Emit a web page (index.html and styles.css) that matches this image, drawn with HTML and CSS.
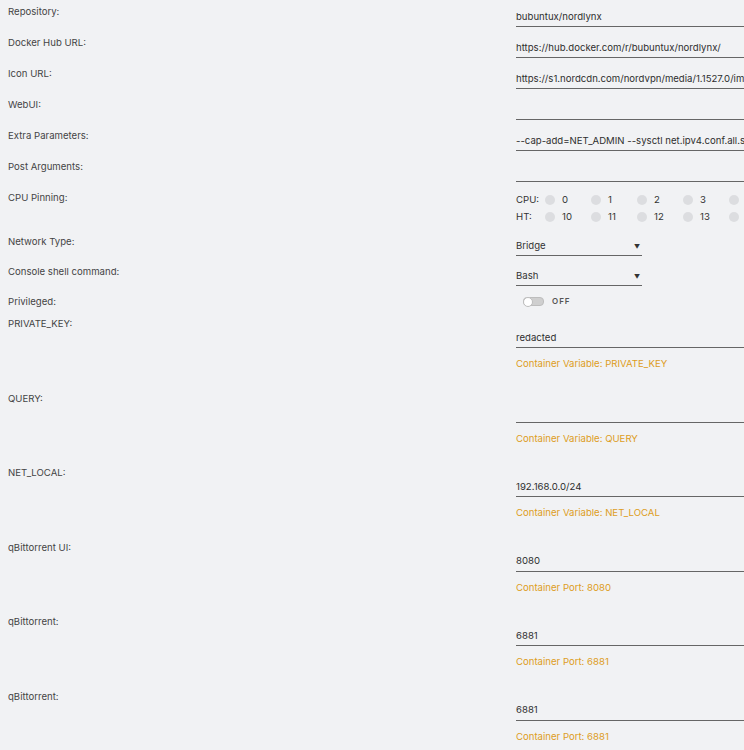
FILE: index.html
```
<!DOCTYPE html>
<html lang="en">
  <head>
    <meta charset="UTF-8" />
    <meta name="viewport" content="width=device-width, initial-scale=1.0" />
    <title>Update Container</title>
    <link rel="stylesheet" href="styles.css">
  </head>
  <body>
    <div class="form">
      <div class="row basic">
        <div class="label">Repository:</div>
        <div class="field"><input type="text" value="bubuntux/nordlynx" /></div>
      </div>
      <div class="row basic">
        <div class="label">Docker Hub URL:</div>
        <div class="field"><input type="text" value="https://hub.docker.com/r/bubuntux/nordlynx/" /></div>
      </div>
      <div class="row basic">
        <div class="label">Icon URL:</div>
        <div class="field"><input type="text" value="https://s1.nordcdn.com/nordvpn/media/1.1527.0/images/global/favicon/favicon-194x194.png" /></div>
      </div>
      <div class="row basic">
        <div class="label">WebUI:</div>
        <div class="field"><input type="text" value="" /></div>
      </div>
      <div class="row basic">
        <div class="label">Extra Parameters:</div>
        <div class="field"><input type="text" value="--cap-add=NET_ADMIN --sysctl net.ipv4.conf.all.src_valid_mark=1" /></div>
      </div>
      <div class="row basic">
        <div class="label">Post Arguments:</div>
        <div class="field"><input type="text" value="" /></div>
      </div>

      <div class="row cpu-row">
        <div class="label">CPU Pinning:</div>
        <div class="field">
          <div class="cpus">
            <span class="cpu-name">CPU:</span>
            <span class="cpu"><i></i>0</span>
            <span class="cpu"><i></i>1</span>
            <span class="cpu"><i></i>2</span>
            <span class="cpu"><i></i>3</span>
            <span class="cpu"><i></i></span>
          </div>
          <div class="cpus">
            <span class="cpu-name">HT:</span>
            <span class="cpu"><i></i>10</span>
            <span class="cpu"><i></i>11</span>
            <span class="cpu"><i></i>12</span>
            <span class="cpu"><i></i>13</span>
            <span class="cpu"><i></i></span>
          </div>
        </div>
      </div>

      <div class="row select-row">
        <div class="label">Network Type:</div>
        <div class="field"><div class="select">Bridge<span class="arrow">&#9660;</span></div></div>
      </div>
      <div class="row select-row">
        <div class="label">Console shell command:</div>
        <div class="field"><div class="select">Bash<span class="arrow">&#9660;</span></div></div>
      </div>
      <div class="row switch-row">
        <div class="label">Privileged:</div>
        <div class="field">
          <span class="switch"><span class="knob"></span></span>
          <span class="switch-text">OFF</span>
        </div>
      </div>

      <div class="row var">
        <div class="label">PRIVATE_KEY:</div>
        <div class="field">
          <input type="text" value="redacted" />
          <div class="desc">Container Variable: PRIVATE_KEY</div>
        </div>
      </div>
      <div class="row var">
        <div class="label">QUERY:</div>
        <div class="field">
          <input type="text" value="" />
          <div class="desc">Container Variable: QUERY</div>
        </div>
      </div>
      <div class="row var">
        <div class="label">NET_LOCAL:</div>
        <div class="field">
          <input type="text" value="192.168.0.0/24" />
          <div class="desc">Container Variable: NET_LOCAL</div>
        </div>
      </div>
      <div class="row var">
        <div class="label">qBittorrent UI:</div>
        <div class="field">
          <input type="text" value="8080" />
          <div class="desc">Container Port: 8080</div>
        </div>
      </div>
      <div class="row var">
        <div class="label">qBittorrent:</div>
        <div class="field">
          <input type="text" value="6881" />
          <div class="desc">Container Port: 6881</div>
        </div>
      </div>
      <div class="row var">
        <div class="label">qBittorrent:</div>
        <div class="field">
          <input type="text" value="6881" />
          <div class="desc">Container Port: 6881</div>
        </div>
      </div>
    </div>
  </body>
</html>
```

FILE: styles.css
```
body {
  margin: 0;
  background-color: #f1f2f4;
  font-family: Inter, "Open Sans", sans-serif;
  font-size: 9.6px;
  color: #333;
  overflow: hidden;
}

.form {
  padding-top: 4px;
}

.row {
  display: grid;
  grid-template-columns: 516px 1fr;
}

.label {
  padding-left: 8px;
  padding-top: 1px;
  line-height: 14px;
  color: #444;
}

input[type="text"] {
  display: block;
  width: 100%;
  box-sizing: border-box;
  margin: 0;
  padding: 0 0 3px;
  border: none;
  border-bottom: 1px solid #666;
  background: transparent;
  font-family: inherit;
  font-size: 9.6px;
  line-height: 14px;
  height: 18px;
  color: #2e2e2e;
  outline: none;
}

/* plain text rows */
.basic {
  height: 31px;
}

.basic .field {
  padding-top: 5px;
}

/* cpu pinning */
.cpu-row {
  height: 44px;
}

.cpu-row .field {
  padding-top: 3px;
}

.cpus {
  display: flex;
  align-items: center;
  height: 14px;
  line-height: 14px;
  margin-bottom: 3px;
}

.cpu-name {
  width: 29px;
}

.cpu {
  display: flex;
  align-items: center;
  width: 46px;
}

.cpu i {
  display: inline-block;
  width: 10px;
  height: 10px;
  border-radius: 50%;
  background: #dcdde0;
  margin-right: 7px;
}

/* selects */
.select-row {
  height: 30px;
}

.select-row .field {
  padding-top: 5px;
}

.select {
  position: relative;
  width: 126px;
  line-height: 14px;
  padding-bottom: 2px;
  border-bottom: 1px solid #666;
}

.arrow {
  position: absolute;
  right: 2px;
  top: 1px;
  font-size: 6px;
}

/* privileged switch */
.switch-row {
  height: 22px;
}

.switch-row .field {
  display: flex;
  align-items: center;
  height: 14px;
  padding-left: 7px;
}

.switch {
  position: relative;
  display: inline-block;
  width: 19px;
  height: 7px;
  border-radius: 4px;
  background: #cfcfcf;
  border: 1px solid #bdbdbd;
}

.knob {
  position: absolute;
  left: -1px;
  top: -1px;
  width: 8px;
  height: 8px;
  border-radius: 50%;
  background: #fff;
  border: 1px solid #bdbdbd;
}

.switch-text {
  margin-left: 8px;
  font-size: 8px;
  font-weight: 600;
  letter-spacing: 1px;
  color: #555;
}

/* container variables and ports */
.var {
  height: 74.6px;
}

.var .field {
  padding-top: 14px;
}

.desc {
  margin-top: 9px;
  line-height: 14px;
  color: #dd9d1d;
}
```
